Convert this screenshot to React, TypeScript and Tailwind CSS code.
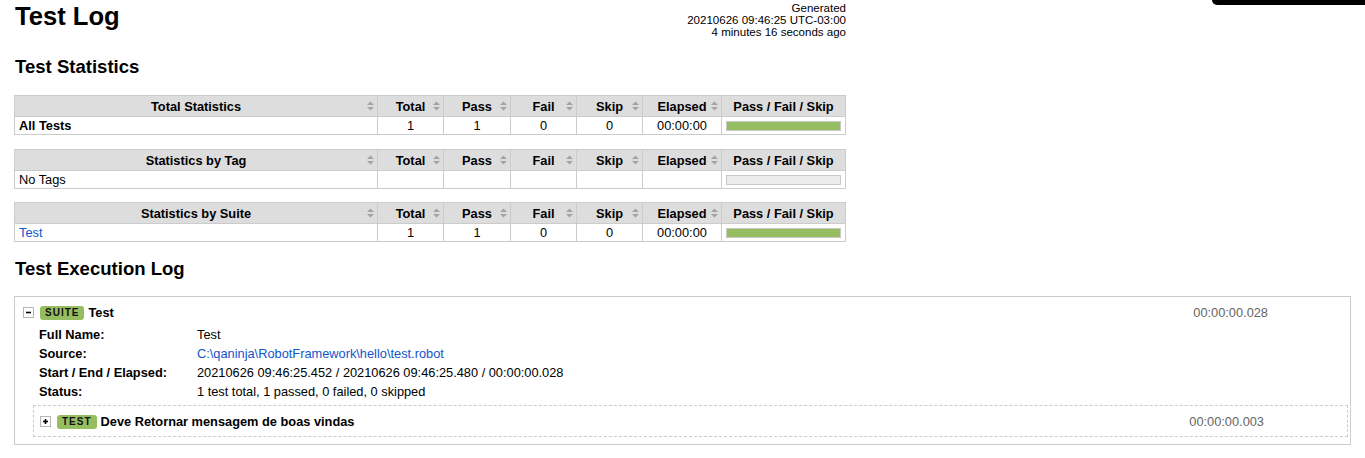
import React from "react";

const SortIcon = () => (
  <svg
    width="7"
    height="10"
    viewBox="0 0 7 10"
    className="absolute right-[3px] top-1/2 -translate-y-1/2"
  >
    <path d="M0 4 L3.5 0.5 L7 4 Z" fill="#a3a3a3" />
    <path d="M0 6 L3.5 9.5 L7 6 Z" fill="#a3a3a3" />
  </svg>
);

const Toggle = ({ plus }: { plus?: boolean }) => (
  <svg width="11" height="11" viewBox="0 0 11 11" className="shrink-0">
    <rect x="0.5" y="0.5" width="10" height="10" fill="#fff" stroke="#b5b5b5" />
    <line x1="3" y1="5.5" x2="8" y2="5.5" stroke="#000" strokeWidth="1.6" />
    {plus && <line x1="5.5" y1="3" x2="5.5" y2="8" stroke="#000" strokeWidth="1.6" />}
  </svg>
);

const Badge = ({ text }: { text: string }) => (
  <span className="inline-flex h-[14px] items-center rounded-[3px] bg-[#97bd61] px-[5px] text-[10px] font-bold leading-[12px] tracking-[1px] text-[#111]">
    {text}
  </span>
);

type Row = {
  label: React.ReactNode;
  total: string;
  pass: string;
  fail: string;
  skip: string;
  elapsed: string;
  bar: "pass" | "empty";
};

const headers = ["Total", "Pass", "Fail", "Skip", "Elapsed"];

function StatTable({ title, row, className }: { title: string; row: Row; className?: string }) {
  const th = "relative h-[21px] border border-[#ccc] bg-[#ddd] p-0 text-center font-bold";
  const td = "h-[18px] border border-[#ccc] p-0 text-center";
  return (
    <table className={"w-[832px] table-fixed border-collapse " + (className ?? "")}>
      <colgroup>
        <col className="w-[363px]" />
        <col className="w-[66px]" />
        <col className="w-[67px]" />
        <col className="w-[66px]" />
        <col className="w-[66px]" />
        <col className="w-[79px]" />
        <col className="w-[124px]" />
      </colgroup>
      <thead>
        <tr>
          <th className={th}>
            {title}
            <SortIcon />
          </th>
          {headers.map((h) => (
            <th key={h} className={th}>
              {h}
              <SortIcon />
            </th>
          ))}
          <th className={th}>Pass / Fail / Skip</th>
        </tr>
      </thead>
      <tbody>
        <tr>
          <td className="h-[18px] border border-[#ccc] p-0 pl-[4px] text-left">{row.label}</td>
          <td className={td}>{row.total}</td>
          <td className={td}>{row.pass}</td>
          <td className={td}>{row.fail}</td>
          <td className={td}>{row.skip}</td>
          <td className={td}>{row.elapsed}</td>
          <td className="h-[18px] border border-[#ccc] px-[4px] py-0">
            {row.bar === "pass" ? (
              <div className="h-[10px] border border-[#c8c8c8] bg-[#97bd61]" />
            ) : (
              <div className="h-[10px] border border-[#c8c8c8] bg-[#ececec]" />
            )}
          </td>
        </tr>
      </tbody>
    </table>
  );
}

export default function App() {
  return (
    <div
      className="relative min-h-[458px] bg-white px-[14px] text-[12.8px] leading-[15px] text-black"
      style={{ fontFamily: '"Liberation Sans", Arial, Helvetica, sans-serif' }}
    >
      <div className="absolute right-0 top-0 h-[5px] w-[153px] rounded-bl-[5px] bg-black" />

      <div className="flex w-[832px] items-start justify-between">
        <h1 className="mt-[1px] pl-[1px] text-[25.6px] font-bold leading-[30px]">Test Log</h1>
        <div className="mt-[2px] text-right text-[11.52px] leading-[12px]">
          <div>Generated</div>
          <div>20210626 09:46:25 UTC-03:00</div>
          <div>4 minutes 16 seconds ago</div>
        </div>
      </div>

      <h2 className="mt-[18px] pl-[1px] text-[18.56px] font-bold leading-[22px]">Test Statistics</h2>

      <StatTable
        className="mt-[17px]"
        title="Total Statistics"
        row={{
          label: <span className="font-bold">All Tests</span>,
          total: "1",
          pass: "1",
          fail: "0",
          skip: "0",
          elapsed: "00:00:00",
          bar: "pass",
        }}
      />
      <StatTable
        className="mt-[14px]"
        title="Statistics by Tag"
        row={{
          label: "No Tags",
          total: "",
          pass: "",
          fail: "",
          skip: "",
          elapsed: "",
          bar: "empty",
        }}
      />
      <StatTable
        className="mt-[13px]"
        title="Statistics by Suite"
        row={{
          label: <span className="text-[#15c]">Test</span>,
          total: "1",
          pass: "1",
          fail: "0",
          skip: "0",
          elapsed: "00:00:00",
          bar: "pass",
        }}
      />

      <h2 className="mt-[16px] pl-[1px] text-[18.56px] font-bold leading-[22px]">Test Execution Log</h2>

      <div className="mt-[16px] border border-[#ccc] pb-[7px] pl-[8px] pt-[3px]">
        <div className="flex h-[24px] items-center">
          <Toggle />
          <span className="ml-[6px]">
            <Badge text="SUITE" />
          </span>
          <span className="ml-[4px] font-bold">Test</span>
          <span className="ml-auto mr-[82px] text-[#666]">00:00:00.028</span>
        </div>

        <div className="ml-[16px] mt-[1px] flex flex-col">
          {[
            ["Full Name:", <span>Test</span>],
            ["Source:", <span className="text-[#15c]">C:\qaninja\RobotFramework\hello\test.robot</span>],
            [
              "Start / End / Elapsed:",
              <span>20210626 09:46:25.452 / 20210626 09:46:25.480 / 00:00:00.028</span>,
            ],
            ["Status:", <span>1 test total, 1 passed, 0 failed, 0 skipped</span>],
          ].map(([k, v], i) => (
            <div key={i} className="flex h-[19px] items-center">
              <span className="w-[158px] shrink-0 font-bold">{k}</span>
              {v}
            </div>
          ))}
        </div>

        <div className="ml-[10px] mr-[2px] mt-[4px] flex h-[32px] items-center border border-dashed border-[#ccc] pl-[6px]">
          <Toggle plus />
          <span className="ml-[6px]">
            <Badge text="TEST" />
          </span>
          <span className="ml-[4px] font-bold">Deve Retornar mensagem de boas vindas</span>
          <span className="ml-auto mr-[83px] text-[#666]">00:00:00.003</span>
        </div>
      </div>
    </div>
  );
}
